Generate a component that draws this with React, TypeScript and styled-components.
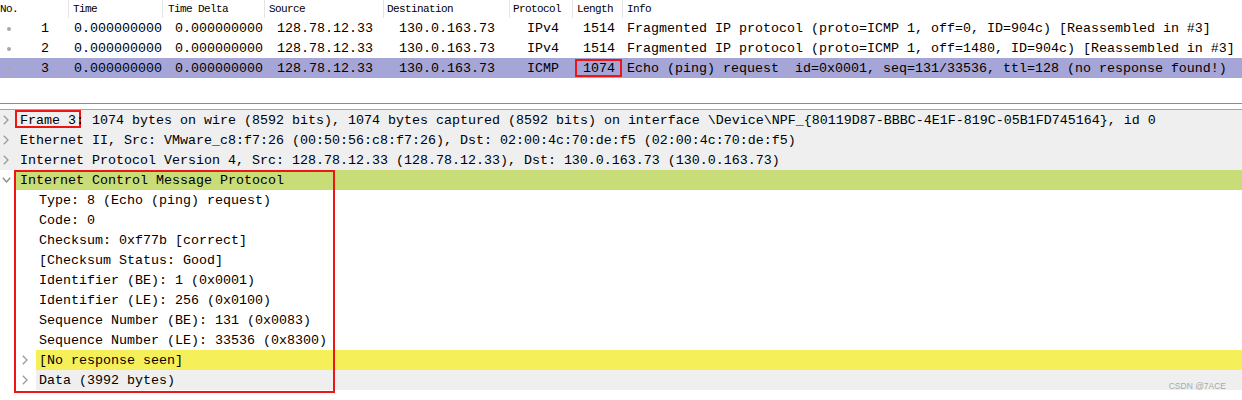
import React from 'react';
import styled, { createGlobalStyle } from 'styled-components';

const Global = createGlobalStyle`
  html, body { margin: 0; padding: 0; background: #fff; }
  body { font-family: "Liberation Mono", "DejaVu Sans Mono", monospace; color: #000; }
  * { box-sizing: border-box; }
`;

const RED = '#ee1515';
const COLS = '69px 94px 102px 119px 126px 63px 50px 1fr';

const Page = styled.div`
  position: relative;
  width: 1242px;
  height: 400px;
  overflow: hidden;
  display: flex;
  flex-direction: column;
`;

const PacketList = styled.div`
  height: 103px;
  display: flex;
  flex-direction: column;
`;

const HeaderRow = styled.div`
  display: grid;
  grid-template-columns: ${COLS};
  height: 18px;
  font-size: 11px;
  letter-spacing: -0.6px;
  line-height: 18px;
  color: #000;
`;

const HeaderCell = styled.div<{ $pad: number; $last?: boolean }>`
  padding-left: ${p => p.$pad}px;
  border-right: ${p => (p.$last ? 'none' : '1px solid #e4e4e4')};
  white-space: nowrap;
  overflow: hidden;
`;

const PacketRow = styled.div<{ $selected?: boolean }>`
  display: grid;
  grid-template-columns: ${COLS};
  height: 20px;
  font-size: 13.333px;
  line-height: 22px;
  background: ${p => (p.$selected ? '#a5a5d8' : '#fff')};
  white-space: pre;
`;

const NoCell = styled.div`
  display: flex;
  align-items: center;
  justify-content: space-between;
  padding-left: 7px;
  padding-right: 20px;
`;

const Dot = styled.span`
  width: 4px;
  height: 4px;
  border-radius: 50%;
  background: #a8a8a8;
`;

const Cell = styled.div<{ $pad?: number; $right?: number }>`
  padding-left: ${p => p.$pad ?? 0}px;
  padding-right: ${p => p.$right ?? 0}px;
  text-align: ${p => (p.$right !== undefined ? 'right' : 'left')};
  overflow: hidden;
  height: 20px;
`;

const MarkedCell = styled(Cell)`
  position: relative;
  overflow: visible;
  &::after {
    content: '';
    position: absolute;
    left: 2px;
    right: 1px;
    top: 1px;
    bottom: 1px;
    border: 2px solid ${RED};
  }
`;

const Divider = styled.div`
  height: 7px;
  border-top: 1px solid #8c8c8c;
  border-bottom: 1px solid #a4a4a4;
`;

const Tree = styled.div`
  display: flex;
  flex-direction: column;
  font-size: 13.333px;
`;

const TreeRow = styled.div<{ $rowBg?: string }>`
  display: flex;
  align-items: stretch;
  height: 20px;
  line-height: 22px;
  background: ${p => p.$rowBg ?? 'transparent'};
  white-space: pre;
`;

const Expander = styled.div<{ $width: number; $offset: number }>`
  width: ${p => p.$width}px;
  flex: none;
  display: flex;
  align-items: center;
  padding-left: ${p => p.$offset}px;
`;

const Label = styled.div<{ $bg?: string; $pad: number }>`
  flex: 1;
  height: 20px;
  background: ${p => p.$bg ?? 'transparent'};
  padding-left: ${p => p.$pad}px;
`;

const MarkedText = styled.span`
  position: relative;
  display: inline-block;
  height: 20px;
  &::after {
    content: '';
    position: absolute;
    left: -5px;
    right: 3px;
    top: 0;
    bottom: 2px;
    border: 2px solid ${RED};
  }
`;

const OnTop = styled.span`
  position: relative;
  z-index: 1;
`;

const Group = styled.div`
  position: relative;
  display: flex;
  flex-direction: column;
`;

const GroupBox = styled.div`
  position: absolute;
  left: 14px;
  top: 0;
  width: 321px;
  height: calc(100% + 3px);
  border: 2px solid ${RED};
  pointer-events: none;
`;

const Watermark = styled.div`
  position: absolute;
  right: 16px;
  bottom: 8px;
  font-family: "Liberation Sans", Arial, sans-serif;
  font-size: 8.5px;
  line-height: 12px;
  color: #a8a8a8;
`;

const ChevronRight = () => (
  <svg width="6" height="10" viewBox="0 0 6 10">
    <polyline points="0.8,0.8 5,5 0.8,9.2" fill="none" stroke="#9a9a9a" strokeWidth="1.3" />
  </svg>
);

const ChevronDown = () => (
  <svg width="9" height="6" viewBox="0 0 9 6">
    <polyline points="0.8,0.8 4.5,5 8.2,0.8" fill="none" stroke="#8a8a8a" strokeWidth="1.3" />
  </svg>
);

const headers: { label: string; pad: number }[] = [
  { label: 'No.', pad: 0 },
  { label: 'Time', pad: 4 },
  { label: 'Time Delta', pad: 5 },
  { label: 'Source', pad: 4 },
  { label: 'Destination', pad: 3 },
  { label: 'Protocol', pad: 3 },
  { label: 'Length', pad: 4 },
  { label: 'Info', pad: 4 },
];

const packets = [
  {
    no: '1', proto: 'IPv4', len: '1514',
    info: 'Fragmented IP protocol (proto=ICMP 1, off=0, ID=904c) [Reassembled in #3]',
  },
  {
    no: '2', proto: 'IPv4', len: '1514',
    info: 'Fragmented IP protocol (proto=ICMP 1, off=1480, ID=904c) [Reassembled in #3]',
  },
  {
    no: '3', proto: 'ICMP', len: '1074', selected: true,
    info: 'Echo (ping) request  id=0x0001, seq=131/33536, ttl=128 (no response found!)',
  },
];

const topRows = [
  'Ethernet II, Src: VMware_c8:f7:26 (00:50:56:c8:f7:26), Dst: 02:00:4c:70:de:f5 (02:00:4c:70:de:f5)',
  'Internet Protocol Version 4, Src: 128.78.12.33 (128.78.12.33), Dst: 130.0.163.73 (130.0.163.73)',
];

const icmpFields = [
  'Type: 8 (Echo (ping) request)',
  'Code: 0',
  'Checksum: 0xf77b [correct]',
  '[Checksum Status: Good]',
  'Identifier (BE): 1 (0x0001)',
  'Identifier (LE): 256 (0x0100)',
  'Sequence Number (BE): 131 (0x0083)',
  'Sequence Number (LE): 33536 (0x8300)',
];

export default function App() {
  return (
    <Page>
      <Global />
      <PacketList>
        <HeaderRow>
          {headers.map((h, i) => (
            <HeaderCell key={h.label} $pad={h.pad} $last={i === headers.length - 1}>
              {h.label}
            </HeaderCell>
          ))}
        </HeaderRow>
        {packets.map(p => (
          <PacketRow key={p.no} $selected={p.selected}>
            <NoCell>
              <Dot />
              <span>{p.no}</span>
            </NoCell>
            <Cell $pad={5}>0.000000000</Cell>
            <Cell $pad={12}>0.000000000</Cell>
            <Cell $pad={12}>128.78.12.33</Cell>
            <Cell $pad={15}>130.0.163.73</Cell>
            <Cell $pad={17}>{p.proto}</Cell>
            {p.selected ? (
              <MarkedCell $right={8}>{p.len}</MarkedCell>
            ) : (
              <Cell $right={8}>{p.len}</Cell>
            )}
            <Cell $pad={4}>{p.info}</Cell>
          </PacketRow>
        ))}
      </PacketList>
      <Divider />
      <Tree>
        <TreeRow $rowBg="#efefef">
          <Expander $width={16} $offset={3}>
            <ChevronRight />
          </Expander>
          <Label $pad={4}>
            <MarkedText>
              <OnTop>Frame 3:</OnTop>
            </MarkedText>
            {' 1074 bytes on wire (8592 bits), 1074 bytes captured (8592 bits) on interface \\Device\\NPF_{80119D87-BBBC-4E1F-819C-05B1FD745164}, id 0'}
          </Label>
        </TreeRow>
        {topRows.map(t => (
          <TreeRow key={t} $rowBg="#efefef">
            <Expander $width={16} $offset={3}>
              <ChevronRight />
            </Expander>
            <Label $pad={4}>{t}</Label>
          </TreeRow>
        ))}
        <Group>
          <TreeRow>
            <Expander $width={16} $offset={2}>
              <ChevronDown />
            </Expander>
            <Label $bg="#c8dd77" $pad={4}>Internet Control Message Protocol</Label>
          </TreeRow>
          {icmpFields.map(f => (
            <TreeRow key={f}>
              <Expander $width={36} $offset={0} />
              <Label $pad={3}>{f}</Label>
            </TreeRow>
          ))}
          <TreeRow>
            <Expander $width={36} $offset={22}>
              <ChevronRight />
            </Expander>
            <Label $bg="#f5f05a" $pad={3}>[No response seen]</Label>
          </TreeRow>
          <TreeRow>
            <Expander $width={36} $offset={22}>
              <ChevronRight />
            </Expander>
            <Label $bg="#efefef" $pad={3}>Data (3992 bytes)</Label>
          </TreeRow>
          <GroupBox />
        </Group>
      </Tree>
      <Watermark>CSDN @7ACE</Watermark>
    </Page>
  );
}
